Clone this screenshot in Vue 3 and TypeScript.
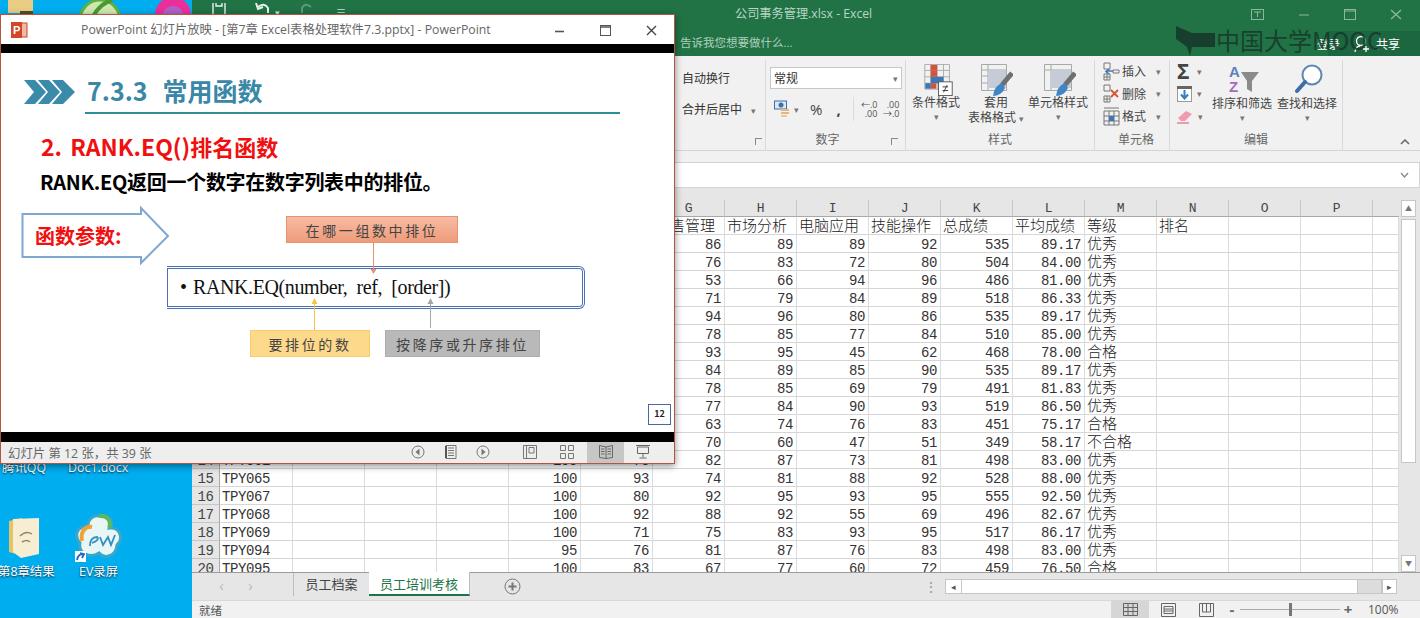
<script setup lang="ts">
const columns = "ABCDEFGHIJKLMNOP".split("");

function scoreRow(id: string, e: string, f: string, marks: string): string[] {
  return [id, "", "", "", e, f, ...marks.split(" "), "", "", ""];
}

// rows 1-13 sit behind the slide show window, only the right side shows
const rows: string[][] = [
  ["", "", "", "", "", "", "销售管理", "市场分析", "电脑应用", "技能操作", "总成绩", "平均成绩", "等级", "排名", "", ""],
  scoreRow("", "", "", "86 89 89 92 535 89.17 优秀"),
  scoreRow("", "", "", "76 83 72 80 504 84.00 优秀"),
  scoreRow("", "", "", "53 66 94 96 486 81.00 优秀"),
  scoreRow("", "", "", "71 79 84 89 518 86.33 优秀"),
  scoreRow("", "", "", "94 96 80 86 535 89.17 优秀"),
  scoreRow("", "", "", "78 85 77 84 510 85.00 优秀"),
  scoreRow("", "", "", "93 95 45 62 468 78.00 合格"),
  scoreRow("", "", "", "84 89 85 90 535 89.17 优秀"),
  scoreRow("", "", "", "78 85 69 79 491 81.83 优秀"),
  scoreRow("", "", "", "77 84 90 93 519 86.50 优秀"),
  scoreRow("", "", "", "63 74 76 83 451 75.17 合格"),
  scoreRow("", "", "", "70 60 47 51 349 58.17 不合格"),
  scoreRow("TPY061", "100", "73", "82 87 73 81 498 83.00 优秀"),
  scoreRow("TPY065", "100", "93", "74 81 88 92 528 88.00 优秀"),
  scoreRow("TPY067", "100", "80", "92 95 93 95 555 92.50 优秀"),
  scoreRow("TPY068", "100", "92", "88 92 55 69 496 82.67 优秀"),
  scoreRow("TPY069", "100", "71", "75 83 93 95 517 86.17 优秀"),
  scoreRow("TPY094", "95", "76", "81 87 76 83 498 83.00 优秀"),
  scoreRow("TPY095", "100", "83", "67 77 60 72 459 76.50 合格"),
];

function cellClass(value: string) {
  return {
    num: /^[\d.]+$/.test(value),
    cjk: /[\u4e00-\u9fff]/.test(value),
  };
}
</script>

<template>
  <div class="desktop">
    <!-- desktop icons, mostly covered by the windows -->
    <svg class="d-icon" style="left: 8px; top: 0" width="26" height="15" viewBox="0 0 26 15">
      <rect width="25" height="13" fill="#e9cd85" />
      <rect x="12" y="11" width="13" height="4" fill="#5a4a30" />
    </svg>
    <svg class="d-icon" style="left: 78px; top: 0" width="44" height="15" viewBox="0 0 44 15">
      <circle cx="22" cy="20" r="20" fill="#cfe8b0" stroke="#5fb040" stroke-width="3" />
      <path d="M16 15 Q22 4 34 0" fill="none" stroke="#4a9a30" stroke-width="4" />
    </svg>
    <svg class="d-icon" style="left: 154px; top: 0" width="40" height="15" viewBox="0 0 40 15">
      <circle cx="19" cy="15" r="18" fill="#ea2f9b" />
      <circle cx="19" cy="17" r="11" fill="#b060c8" />
    </svg>

    <span class="d-label" style="left: 2px; top: 460px">腾讯QQ</span>
    <span class="d-label" style="left: 68px; top: 460px">Doc1.docx</span>

    <svg class="d-icon" style="left: 8px; top: 516px" width="32" height="44" viewBox="0 0 32 44">
      <path d="M1 5 L14 2 L14 40 L1 36 Z" fill="#e8c266" />
      <path d="M5 3 L31 2 L31 38 L13 42 L5 36 Z" fill="#f6edd2" />
      <path d="M12 20 q6 -6 12 -2 M14 26 q5 -3 8 0" fill="none" stroke="#8a8a70" stroke-width="1.5" />
    </svg>
    <span class="d-label" style="left: -2px; top: 564px">第8章结果</span>

    <svg class="d-icon" style="left: 74px; top: 513px" width="50" height="50" viewBox="0 0 50 50">
      <path d="M25 3 C36 0 40 10 36 15 C46 14 50 26 43 32 C42 44 30 46 25 40 C16 46 4 40 6 30 C-1 22 4 12 14 14 C13 7 19 2 25 3 Z" fill="#e9f6f6" stroke="#3aa7c9" stroke-width="3" />
      <path d="M8 28 C6 18 12 13 18 14" fill="none" stroke="#f0a13a" stroke-width="4" />
      <path d="M25 3 C33 2 38 8 35 15" fill="none" stroke="#5cb85c" stroke-width="4" />
      <path d="M16 33 Q16 24 23 24 Q26 27 18 30 M26 24 L29 32 L34 24 L37 32 L41 22" fill="none" stroke="#2f8fc0" stroke-width="1.8" />
      <rect x="1" y="38" width="11" height="11" fill="#fff" />
      <path d="M3 47 Q4 41 9 41 M6 40 L10 41 L8 45" fill="none" stroke="#2266cc" stroke-width="1.8" />
    </svg>
    <span class="d-label" style="left: 79px; top: 564px">EV录屏</span>

    <!-- excel behind -->
    <div class="excel">
      <div class="xl-top">
        <div class="xl-title">
          <svg class="qat-save" width="16" height="14" viewBox="0 0 16 14"><path d="M2 0 V12 H14 V0 M5 0 V3 H11 V0" fill="none" stroke="#e9f1ec" stroke-width="1.4" /></svg>
          <svg class="qat-undo" width="18" height="14" viewBox="0 0 18 14"><path d="M3 4 Q9 -1 13 5 L13 10" fill="none" stroke="#e9f1ec" stroke-width="2" /><path d="M1 0 L3 6 L8 4" fill="none" stroke="#e9f1ec" stroke-width="2" /></svg>
          <span class="qat-caret">▾</span>
          <svg class="qat-redo" width="18" height="14" viewBox="0 0 18 14"><path d="M14 4 Q8 -1 5 5 L5 10" fill="none" stroke="#5c9a78" stroke-width="2" /></svg>
          <span class="qat-more">≡</span>
          <span class="xl-name">公司事务管理.xlsx - Excel</span>
          <div class="xl-ctrls">
            <svg width="13" height="11" viewBox="0 0 13 11"><rect x="0.5" y="0.5" width="12" height="10" fill="none" stroke="#8db69e" /><path d="M3 3 H10 M6.5 3 V8" stroke="#8db69e" /></svg>
            <svg width="12" height="11" viewBox="0 0 12 11"><path d="M1 6 H11" stroke="#8db69e" /></svg>
            <svg width="12" height="11" viewBox="0 0 12 11"><rect x="0.5" y="0.5" width="11" height="10" fill="none" stroke="#8db69e" /><path d="M1 2 H11" stroke="#8db69e" /></svg>
            <svg width="12" height="11" viewBox="0 0 12 11"><path d="M1 1 L11 10 M11 1 L1 10" stroke="#8db69e" stroke-width="1.4" /></svg>
          </div>
        </div>
        <div class="xl-tell">
          <span class="tell-text">告诉我您想要做什么...</span>
          <div class="xl-account">
            <span class="login">登录</span>
            <svg width="18" height="18" viewBox="0 0 18 18"><circle cx="9" cy="6" r="4.5" fill="none" stroke="#fff" stroke-width="1.3" /><path d="M3 17 Q4 11 8 11 M11 14 H17 M14 11 V17" fill="none" stroke="#fff" stroke-width="1.3" /></svg>
            <span>共享</span>
          </div>
        </div>
        <div class="mooc">
          <svg width="40" height="34" viewBox="0 0 40 34"><path d="M0 3 L16 10 L39 10 L39 24 L16 24 L14 33 L11 24 L0 16 Z" fill="#17362a" /></svg>
          <span>中国大学MOOC</span>
        </div>
      </div>

      <div class="ribbon">
        <div class="group g-align">
          <div class="g-body">
            <div class="wrap-line">自动换行</div>
            <div class="wrap-line">合并后居中 <i class="caret caret-merge">▾</i></div>
          </div>
          <div class="g-label"><i class="launch"></i></div>
        </div>

        <div class="group g-number">
          <div class="g-body">
            <div class="combo"><span>常规</span><i class="caret">▾</i></div>
            <div class="num-tools">
              <svg width="16" height="18" viewBox="0 0 16 18"><rect x="0.5" y="1" width="12" height="8" fill="#dbe9f6" stroke="#3d6fa8" /><circle cx="7" cy="5" r="2.5" fill="#3d6fa8" /><rect x="7" y="9" width="8" height="2" fill="#eab676" /><rect x="7" y="12" width="8" height="2" fill="#eab676" /><rect x="7" y="15" width="6" height="2" fill="#e8c9a0" /></svg>
              <i class="caret">▾</i>
              <span class="pct">%</span>
              <span class="comma">,</span>
              <span class="tool-sep"></span>
              <span class="dec">←.0<br />.00</span>
              <span class="dec">.00<br />→.0</span>
            </div>
          </div>
          <div class="g-label label-number">数字<i class="launch"></i></div>
        </div>

        <div class="group g-styles">
          <div class="g-body big-row">
            <div class="big b-cond">
              <svg width="29" height="32" viewBox="0 0 31 35">
                <path d="M0.5 0.5 H27.5 V27.5 H0.5 Z M0.5 7 H27.5 M0.5 14 H27.5 M0.5 21 H27.5 M7 0.5 V27.5 M14 0.5 V27.5 M21 0.5 V27.5" fill="none" stroke="#a8a8a8" />
                <rect x="7" y="1" width="7" height="6" fill="#d2553a" /><rect x="7" y="7" width="7" height="7" fill="#d2553a" /><rect x="7" y="14" width="14" height="7" fill="#3b78b8" /><rect x="7" y="21" width="6" height="6" fill="#d2553a" /><rect x="1" y="21" width="6" height="6" fill="#3b78b8" />
                <rect x="15.5" y="19.5" width="15" height="15" fill="#fff" stroke="#555" /><path d="M20 25 H26 M20 29 H26 M25 23 L21 31" stroke="#333" />
              </svg>
              <div class="big-text">条件格式</div>
              <i class="caret">▾</i>
            </div>
            <div class="big b-table">
              <svg width="32" height="35" viewBox="0 0 32 35">
                <path d="M0.5 0.5 H25.5 V26.5 H0.5 Z M0.5 6 H25.5 M0.5 12 H25.5 M0.5 19 H25.5 M7 0.5 V26.5" fill="none" stroke="#a8a8a8" />
                <rect x="7" y="6" width="18" height="18" fill="#c6ccd6" />
                <path d="M31 9 L21 21" stroke="#6f6f6f" stroke-width="5" /><path d="M21 19 Q13 22 12 32 Q20 32 24 24 Z" fill="#3f86c6" />
              </svg>
              <div class="big-text">套用<br />表格格式 <i class="caret">▾</i></div>
            </div>
            <div class="big b-cell">
              <svg width="32" height="35" viewBox="0 0 32 35">
                <path d="M0.5 0.5 H27.5 V26.5 H0.5 Z M0.5 6 H27.5" fill="none" stroke="#a8a8a8" /><path d="M7 0.5 V26.5" stroke="#a8a8a8" />
                <rect x="7" y="6" width="20" height="18" fill="#c6ccd6" />
                <path d="M31 9 L21 21" stroke="#6f6f6f" stroke-width="5" /><path d="M21 19 Q13 22 12 32 Q20 32 24 24 Z" fill="#3f86c6" />
              </svg>
              <div class="big-text">单元格样式</div>
              <i class="caret">▾</i>
            </div>
          </div>
          <div class="g-label">样式</div>
        </div>

        <div class="group g-cells">
          <div class="g-body">
            <div class="cell-line">
              <svg width="17" height="19" viewBox="0 0 17 19"><path d="M1 1 H7 V7 H1 Z M1 12 H7 V18 H1 Z M1 15 H7 M4 12 V18 M10 8 H16 V11 H10 Z" fill="none" stroke="#777" /><path d="M10 9 H3 M6 7 L3 9.5 L6 12" fill="none" stroke="#3b78b8" stroke-width="1.6" /></svg>
              <span>插入</span><i class="caret">▾</i>
            </div>
            <div class="cell-line">
              <svg width="17" height="19" viewBox="0 0 17 19"><path d="M1 1 H7 V7 H1 Z M1 12 H7 V18 H1 Z M4 12 V18 M1 15 H7" fill="none" stroke="#777" /><path d="M8 6 L15 13 M15 6 L8 13" stroke="#d2553a" stroke-width="1.8" /></svg>
              <span>删除</span><i class="caret">▾</i>
            </div>
            <div class="cell-line">
              <svg width="17" height="19" viewBox="0 0 17 19"><path d="M1 4 H16 V18 H1 Z M1 9 H16 M1 14 H16 M6 4 V18 M11 4 V18 M1 1 H16" fill="none" stroke="#777" /><rect x="6" y="9" width="5" height="5" fill="#3b78b8" /></svg>
              <span>格式</span><i class="caret">▾</i>
            </div>
          </div>
          <div class="g-label">单元格</div>
        </div>

        <div class="group g-edit">
          <div class="g-body big-row">
            <div class="edit-col">
              <div class="edit-line"><span class="sigma">Σ</span><i class="caret">▾</i></div>
              <div class="edit-line">
                <svg width="15" height="16" viewBox="0 0 15 16"><rect x="0.5" y="0.5" width="14" height="15" fill="#fff" stroke="#999" /><rect x="0" y="0" width="15" height="3" fill="#666" /><path d="M7.5 4 V12 M4 8.5 L7.5 12.5 L11 8.5" fill="none" stroke="#2f7fc1" stroke-width="2" /></svg>
                <i class="caret">▾</i>
              </div>
              <div class="edit-line">
                <svg width="16" height="15" viewBox="0 0 16 15"><path d="M1 9 L9 2 L15 5 L8 12 L4 12 Z" fill="#f29ab0" /><path d="M0 14 H12" stroke="#d05070" /></svg>
                <i class="caret">▾</i>
              </div>
            </div>
            <div class="big b-sort">
              <svg width="32" height="30" viewBox="0 0 32 30">
                <text x="1" y="13" class="az az-a">A</text>
                <text x="1" y="28" class="az az-z">Z</text>
                <path d="M13 8 H31 L24 17 V28 L19 25 V17 Z" fill="#8a8a8a" />
              </svg>
              <div class="big-text">排序和筛选</div>
              <i class="caret">▾</i>
            </div>
            <div class="big b-find">
              <svg width="28" height="30" viewBox="0 0 28 30">
                <circle cx="17" cy="11" r="9.5" fill="#fff" stroke="#5d86b8" stroke-width="2" />
                <path d="M10 18 L2 27" stroke="#3f6fa8" stroke-width="4" stroke-linecap="round" />
              </svg>
              <div class="big-text">查找和选择</div>
              <i class="caret">▾</i>
            </div>
          </div>
          <div class="g-label">编辑</div>
        </div>
        <svg class="collapse" width="10" height="6" viewBox="0 0 10 6"><path d="M1 5 L5 1 L9 5" fill="none" stroke="#666" stroke-width="1.5" /></svg>
      </div>

      <div class="formula-wrap">
        <div class="formula">
          <svg width="9" height="6" viewBox="0 0 9 6"><path d="M1 1 L4.5 5 L8 1" fill="none" stroke="#888" stroke-width="1.3" /></svg>
        </div>
      </div>

      <div class="sheet-wrap">
        <div class="sheet">
          <div class="grid">
            <div class="corner"></div>
            <div v-for="c in columns" :key="c" class="col-h">{{ c }}</div>
            <div class="col-h col-q"></div>
            <template v-for="(row, r) in rows" :key="r">
              <div class="row-h">{{ r + 1 }}</div>
              <div v-for="(value, i) in row" :key="i" class="cell" :class="cellClass(value)">{{ value }}</div>
              <div class="cell"></div>
            </template>
          </div>
        </div>
        <div class="v-scroll">
          <span class="arrow">▲</span>
          <span class="v-thumb"></span>
          <span class="arrow arrow-down">▼</span>
        </div>
      </div>

      <div class="tabs">
        <span class="tab-nav">‹</span>
        <span class="tab-nav">›</span>
        <span class="tab">员工档案</span>
        <span class="tab active">员工培训考核</span>
        <svg class="tab-add" width="17" height="17" viewBox="0 0 17 17"><circle cx="8.5" cy="8.5" r="7.5" fill="none" stroke="#777" /><path d="M8.5 4.5 V12.5 M4.5 8.5 H12.5" stroke="#777" stroke-width="2" /></svg>
        <span class="dots">⋮</span>
        <div class="h-scroll">
          <span class="h-arrow">◂</span>
          <span class="h-thumb"></span>
          <span class="h-track"></span>
        </div>
        <span class="h-arrow h-right">▸</span>
      </div>

      <div class="statusbar">
        <span class="ready">就绪</span>
        <div class="view on">
          <svg width="15" height="13" viewBox="0 0 15 13"><path d="M0.5 0.5 H14.5 V12.5 H0.5 Z M5 0.5 V12.5 M10 0.5 V12.5 M0.5 4.5 H14.5 M0.5 8.5 H14.5" fill="none" stroke="#666" /></svg>
        </div>
        <div class="view">
          <svg width="15" height="14" viewBox="0 0 15 14"><path d="M0.5 0.5 H14.5 V13.5 H0.5 Z M3 3.5 H12 V10.5 H3 Z M3 6 H12 M3 8 H12" fill="none" stroke="#666" /></svg>
        </div>
        <div class="view">
          <svg width="15" height="14" viewBox="0 0 15 14"><path d="M0.5 0.5 H14.5 V13.5 H0.5 Z M3.5 0.5 V9 H11.5 V0.5 M7.5 0.5 V9" fill="none" stroke="#666" /></svg>
        </div>
        <div class="zoom">
          <span class="z-btn">-</span>
          <span class="z-track"><i></i></span>
          <span class="z-btn">+</span>
          <span class="z-val">100%</span>
        </div>
      </div>
    </div>

    <!-- slide show window on top -->
    <div class="ppt">
      <div class="ppt-title">
        <svg width="18" height="18" viewBox="0 0 18 18">
          <rect x="7" y="2" width="10" height="14" fill="#f3b9a8" stroke="#c9482b" />
          <rect x="1" y="1" width="11" height="16" fill="#d24726" />
          <text x="3" y="13" class="p-mark">P</text>
        </svg>
        <span class="ppt-name">PowerPoint 幻灯片放映 - [第7章 Excel表格处理软件7.3.pptx] - PowerPoint</span>
        <div class="ppt-ctrls">
          <svg width="11" height="11" viewBox="0 0 11 11"><path d="M1 6.5 H10" stroke="#555" stroke-width="1.6" /></svg>
          <svg width="11" height="11" viewBox="0 0 11 11"><rect x="0.5" y="0.5" width="10" height="10" fill="none" stroke="#555" /><path d="M1 2 H10" stroke="#555" stroke-width="1.5" /></svg>
          <svg width="11" height="11" viewBox="0 0 11 11"><path d="M1 1 L10 10 M10 1 L1 10" stroke="#444" stroke-width="1.4" /></svg>
        </div>
      </div>
      <div class="bar-black top"></div>
      <div class="slide">
        <div class="s-head">
          <svg width="52" height="24" viewBox="0 0 52 24">
            <path d="M0 0 H11 L22 12 L11 24 H0 L10 12 Z M14 0 H25 L36 12 L25 24 H14 L24 12 Z M28 0 H39 L51 12 L39 24 H28 L38 12 Z" fill="#3a8aa9" />
          </svg>
          <span class="s-title"><span class="s-no">7.3.3</span>常用函数</span>
        </div>
        <div class="s-rule"></div>
        <div class="s-h2"><span class="h2-latin">2. RANK.EQ()</span>排名函数</div>
        <div class="s-desc">RANK.EQ返回一个数字在数字列表中的排位。</div>

        <div class="diagram">
          <div class="formula-box"><span class="bullet">•</span>RANK.EQ(number,&nbsp; ref,&nbsp; [order])</div>
          <svg class="d-lines" width="672" height="379" viewBox="0 0 672 379">
            <path d="M21.5 161 H140 V155 L167 183 L140 210 V204 H21.5 Z" fill="#fff" stroke="#7ea8d2" stroke-width="2" />
            <path d="M372.5 190 V220" stroke="#e8926c" />
            <path d="M369.5 216 L372.5 221 L375.5 216" fill="#e8926c" />
            <path d="M313.5 277 V247" stroke="#f6c444" />
            <path d="M310.5 251 L313.5 245 L316.5 251" fill="#f6c444" />
            <path d="M429.5 275 V247" stroke="#a6a6a6" />
            <path d="M426.5 251 L429.5 245 L432.5 251" fill="#a6a6a6" />
          </svg>
          <span class="fn-args">函数参数:</span>
          <div class="note n-orange">在哪一组数中排位</div>
          <div class="note n-yellow">要排位的数</div>
          <div class="note n-gray">按降序或升序排位</div>
          <div class="page-no">12</div>
        </div>
      </div>
      <div class="bar-black bottom"></div>
      <div class="ppt-status">
        <span class="ppt-count">幻灯片 第 12 张，共 39 张</span>
        <div class="ppt-tools">
          <svg class="t-prev" width="14" height="14" viewBox="0 0 14 14"><circle cx="7" cy="7" r="6" fill="none" stroke="#777" /><path d="M8.5 3.5 L4.5 7 L8.5 10.5 Z" fill="#777" /></svg>
          <svg class="t-notes" width="12" height="14" viewBox="0 0 12 14"><path d="M1 0.5 H11 V13.5 H1 Z M3 3 H9 M3 5.5 H9 M3 8 H9 M3 10.5 H9" fill="none" stroke="#777" /><path d="M1 1 V13" stroke="#555" stroke-width="2" /></svg>
          <svg class="t-next" width="14" height="14" viewBox="0 0 14 14"><circle cx="7" cy="7" r="6" fill="none" stroke="#777" /><path d="M5.5 3.5 L9.5 7 L5.5 10.5 Z" fill="#777" /></svg>
          <svg class="t-normal" width="14" height="14" viewBox="0 0 14 14"><path d="M0.5 0.5 H13.5 V13.5 H0.5 Z M3.5 0.5 V13.5 M6 2.5 H11 V8 H6 Z" fill="none" stroke="#777" /></svg>
          <svg class="t-sorter" width="14" height="14" viewBox="0 0 14 14"><path d="M0.5 0.5 H5.5 V5.5 H0.5 Z M8.5 0.5 H13.5 V5.5 H8.5 Z M0.5 8.5 H5.5 V13.5 H0.5 Z M8.5 8.5 H13.5 V13.5 H8.5 Z" fill="none" stroke="#777" /></svg>
          <span class="t-read">
            <svg width="14" height="14" viewBox="0 0 14 14"><path d="M0.5 0.5 L7 2 L13.5 0.5 V12.5 L7 13.5 L0.5 12.5 Z M7 2 V13.5 M2 4 H5.5 M2 6.5 H5.5 M2 9 H5.5 M8.5 4 H12 M8.5 6.5 H12 M8.5 9 H12" fill="none" stroke="#666" /></svg>
          </span>
          <svg class="t-show" width="14" height="14" viewBox="0 0 14 14"><path d="M0 0.5 H14 M1.5 2 H12.5 V8.5 H1.5 Z M7 8.5 V12 M3.5 13 H10.5" fill="none" stroke="#666" /></svg>
        </div>
      </div>
    </div>
  </div>
</template>

<style scoped>
.desktop {
  position: relative;
  width: 1420px;
  height: 618px;
  overflow: hidden;
  background: #00adef;
  font-family: "Open Sans", "Noto Sans CJK SC", sans-serif;
  font-size: 12px;
  color: #444;
}
.d-icon { position: absolute; }
.d-label {
  position: absolute;
  color: #fff;
  font-size: 12.4px;
  line-height: 16px;
  white-space: nowrap;
  text-shadow: 0 1px 2px #123;
}
i { font-style: normal; }

/* excel */
.excel {
  position: absolute;
  left: 192px;
  top: 0;
  width: 1228px;
  height: 618px;
  display: flex;
  flex-direction: column;
  background: #f1f1f1;
}
.xl-top {
  position: relative;
  height: 56px;
  flex: none;
  background: #217346;
}
.xl-title {
  position: relative;
  height: 28px;
  display: flex;
  align-items: flex-start;
  padding-left: 18px;
}
.qat-save { margin-top: 3px; margin-left: 1px; }
.qat-undo { margin: 3px 0 0 28px; }
.qat-caret { color: #cfe0d6; font-size: 9px; margin: 6px 0 0 2px; }
.qat-redo { margin: 3px 0 0 17px; }
.qat-more { color: #cfe0d6; margin: 4px 0 0 21px; font-size: 10px; }
.xl-name {
  position: absolute;
  left: 543px;
  top: 5px;
  color: #b9d6c5;
  font-size: 12.2px;
  line-height: 18px;
}
.xl-ctrls {
  position: absolute;
  right: 18px;
  top: 9px;
  display: flex;
  gap: 34px;
}
.xl-tell {
  height: 28px;
  display: flex;
  align-items: center;
  justify-content: space-between;
  padding-left: 488px;
  color: #afcfbc;
}
.tell-text { font-size: 11.5px; }
.xl-account {
  height: 25px;
  margin-top: 3px;
  padding: 0 20px 0 0;
  display: flex;
  align-items: center;
  gap: 6px;
  color: #fff;
  background: #1c6640;
  width: 72px;
  justify-content: flex-end;
}
.login {
  position: absolute;
  right: 80px;
  font-size: 11.5px;
}
.mooc {
  position: absolute;
  left: 984px;
  top: 23px;
  display: flex;
  align-items: center;
  color: #17382b;
  opacity: 0.85;
  font-size: 24px;
  line-height: 34px;
  font-family: "Noto Sans CJK SC", sans-serif;
  font-weight: 400;
  white-space: nowrap;
}

.ribbon {
  position: relative;
  height: 95px;
  flex: none;
  display: flex;
  background: #f1f1f1;
  border-bottom: 1px solid #d4d4d4;
  box-sizing: border-box;
}
.group {
  position: relative;
  display: flex;
  flex-direction: column;
  box-sizing: border-box;
  border-right: 1px solid #dadada;
  margin-top: 4px;
}
.g-body { flex: 1 1 0; min-height: 0; position: relative; }
.g-label {
  position: relative;
  flex: none;
  height: 20px;
  line-height: 20px;
  text-align: center;
  color: #666;
  font-size: 12px;
}
.label-number { padding-right: 16px; }
.launch {
  position: absolute;
  right: 3px;
  top: 8px;
  width: 6px;
  height: 6px;
  border-left: 1px solid #888;
  border-top: 1px solid #888;
}
.caret { font-size: 9px; color: #777; line-height: 1; }
.g-align { width: 574px; padding-left: 490px; }
.wrap-line {
  height: 31px;
  line-height: 31px;
  font-size: 12px;
  color: #333;
  white-space: nowrap;
  position: relative;
  top: 3px;
}
.caret-merge { margin-left: 6px; }
.g-number { width: 140px; padding: 7px 4px 0 4px; }
.combo {
  height: 22px;
  box-sizing: border-box;
  border: 1px solid #c8c8c8;
  background: #fff;
  display: flex;
  align-items: center;
  justify-content: space-between;
  padding: 0 3px;
  color: #333;
  width: 132px;
}
.num-tools {
  display: flex;
  align-items: center;
  margin-top: 9px;
  padding-left: 4px;
  height: 22px;
}
.num-tools .caret { margin-left: 4px; }
.pct { font-size: 15px; margin-left: 11px; color: #444; }
.comma { font-size: 15px; font-weight: 700; margin-left: 14px; width: 10px; color: #444; }
.tool-sep { width: 1px; height: 24px; background: #dcdcdc; margin: 0 1px 0 7px; }
.dec { font-size: 9px; line-height: 9px; width: 22px; text-align: right; color: #555; white-space: nowrap; }

.g-styles { width: 189px; }
.big-row { display: flex; }
.big {
  display: flex;
  flex-direction: column;
  align-items: center;
  text-align: center;
  color: #444;
}
.big-text { font-size: 12px; line-height: 15px; white-space: nowrap; margin-top: -3px; }
.big .caret { margin-top: 2px; }
.b-cond { width: 60px; }
.b-table { width: 56px; margin-left: 2px; }
.b-cell { width: 62px; margin-left: 3px; }
.b-cond svg { margin: 4px 0 2px 4px; }
.b-table svg { margin: 4px 0 -1px 2px; }
.b-cell svg { margin: 4px 0 -1px 4px; }
.g-cells { width: 75px; padding: 0 0 0 8px; }
.cell-line {
  display: flex;
  align-items: center;
  height: 22.5px;
  gap: 2px;
  color: #444;
}
.cell-line .caret { margin-left: 8px; }
.g-edit { width: 173px; border-right: 1px solid #dadada; }
.edit-col { width: 40px; padding: 0 0 0 7px; box-sizing: border-box; }
.edit-line { height: 22.5px; display: flex; align-items: center; gap: 5px; }
.sigma { font-size: 21px; line-height: 21px; color: #444; font-weight: 700; width: 15px; }
.az { font-family: "Liberation Sans", sans-serif; font-size: 15px; font-weight: 700; }
.az-a { fill: #5b7fc0; }
.az-z { fill: #a46bbd; }
.b-sort { width: 60px; margin: 3px 0 0 2px; }
.b-sort svg { margin: 1px 0 -1px 4px; }
.b-find { width: 60px; margin: 3px 0 0 5px; }
.b-find svg { margin: 1px 0 -1px 4px; }
.b-sort .big-text, .b-find .big-text { margin-top: 3px; }
.collapse { position: absolute; right: 10px; top: 83px; }

.formula-wrap {
  height: 49px;
  flex: none;
  box-sizing: border-box;
  padding-top: 11px;
  background: linear-gradient(#f1f1f1 11px, #e6e6e6 11px);
}
.formula {
  height: 26px;
  background: #fff;
  border: 1px solid #d4d4d4;
  box-sizing: border-box;
  display: flex;
  align-items: center;
  justify-content: flex-end;
  padding-right: 10px;
}

.sheet-wrap {
  flex: 1;
  min-height: 0;
  display: flex;
  background: #e6e6e6;
}
.sheet {
  width: 1207px;
  overflow: hidden;
  height: 372px;
  background: #fff;
}
.grid {
  display: grid;
  grid-template-columns: 28px 73px repeat(15, 72px) 26px;
  grid-auto-rows: 18px;
  grid-template-rows: 17px;
  line-height: 21px;
  font-family: "Liberation Mono", "Noto Sans CJK SC", monospace;
  font-size: 14px;
  letter-spacing: -0.4px;
  color: #333;
}
.corner, .col-h, .row-h {
  background: #e6e6e6;
  box-sizing: border-box;
  text-align: center;
  color: #444;
}
.col-h {
  border-right: 1px solid #c6c6c6;
  border-bottom: 1px solid #a8a8a8;
  line-height: 18px;
  font-size: 13px;
}
.col-q { border-right: none; }
.row-h { border-right: 1px solid #a8a8a8; border-bottom: 1px solid #c6c6c6; }
.cell {
  box-sizing: border-box;
  border-right: 1px solid #dcdcdc;
  border-bottom: 1px solid #d6d6d6;
  padding: 0 2px;
  white-space: nowrap;
  background: #fff;
}
.cell.num { text-align: right; padding-right: 3px; }
.cell.cjk {
  font-family: "Noto Sans CJK SC", sans-serif;
  font-size: 15px;
  letter-spacing: 0;
  line-height: 16px;
  font-weight: 300;
  color: #222;
}
.v-scroll {
  width: 21px;
  height: 372px;
  position: relative;
  background: #e6e6e6;
}
.arrow {
  position: absolute;
  left: 2px;
  top: 0;
  width: 15px;
  height: 17px;
  background: #fff;
  border: 1px solid #c6c6c6;
  box-sizing: border-box;
  font-size: 7px;
  line-height: 15px;
  text-align: center;
  color: #777;
}
.arrow-down { top: auto; bottom: 0; }
.v-thumb {
  position: absolute;
  left: 2px;
  top: 19px;
  width: 15px;
  height: 244px;
  background: #fff;
  border: 1px solid #c6c6c6;
  box-sizing: border-box;
}

.tabs {
  position: relative;
  height: 28px;
  flex: none;
  display: flex;
  align-items: flex-start;
  box-sizing: border-box;
  border-top: 1px solid #9c9c9c;
  background: #e6e6e6;
  font-size: 13px;
}
.tab-nav {
  width: 29px;
  text-align: center;
  color: #bbb;
  font-size: 15px;
  line-height: 24px;
}
.tab-nav:first-child { margin-left: 15px; }
.tab {
  margin-left: 28px;
  width: 76px;
  height: 23px;
  line-height: 23px;
  text-align: center;
  box-sizing: border-box;
  border-left: 1px solid #bdbdbd;
  color: #444;
  font-size: 13px;
}
.tab.active {
  margin-left: 0;
  width: 101px;
  height: 24px;
  background: #fff;
  color: #217346;
  border-left: none;
  border-bottom: 2px solid #217346;
  border-right: 1px solid #bdbdbd;
  margin-top: -1px;
  line-height: 25px;
}
.tab-add { margin: 5px 0 0 34px; }
.dots { position: absolute; left: 732px; top: 4px; color: #999; font-size: 14px; line-height: 20px; }
.h-scroll {
  position: absolute;
  left: 753px;
  top: 6px;
  width: 437px;
  height: 15px;
  display: flex;
  box-sizing: border-box;
  border: 1px solid #c6c6c6;
  background: #fff;
}
.h-arrow { width: 15px; text-align: center; font-size: 9px; line-height: 13px; color: #555; background: #fff; }
.h-thumb { width: 395px; background: #fff; border-left: 1px solid #c6c6c6; border-right: 1px solid #c6c6c6; }
.h-track { flex: 1; background: #dcdcdc; }
.h-right {
  position: absolute;
  left: 1190px;
  top: 6px;
  height: 15px;
  box-sizing: border-box;
  border: 1px solid #c6c6c6;
}

.statusbar {
  height: 18px;
  flex: none;
  display: flex;
  align-items: center;
  box-sizing: border-box;
  background: #f1f1f1;
  border-top: 1px solid #d8d8d8;
  color: #555;
}
.ready { padding-left: 7px; width: 919px; box-sizing: border-box; font-size: 11.5px; }
.view {
  width: 38px;
  height: 17px;
  display: flex;
  align-items: center;
  justify-content: center;
}
.view.on { background: #d6d6d6; }
.zoom {
  display: flex;
  align-items: center;
  margin-left: 1px;
  flex: 1;
}
.z-btn { width: 12px; text-align: center; font-size: 15px; font-weight: 700; line-height: 15px; color: #666; }
.z-track {
  position: relative;
  width: 100px;
  height: 1px;
  background: #aaa;
  margin: 0 2px;
}
.z-track i {
  position: absolute;
  left: 49px;
  top: -6px;
  width: 3px;
  height: 13px;
  background: #777;
}
.z-val { margin-left: 14px; font-size: 12px; }

/* powerpoint */
.ppt {
  position: absolute;
  left: 0;
  top: 14px;
  width: 675px;
  height: 450px;
  box-sizing: border-box;
  border: 1px solid #b2573f;
  box-shadow: 0 2px 7px rgba(0, 0, 0, 0.45);
  display: flex;
  flex-direction: column;
  background: #fff;
}
.ppt-title {
  position: relative;
  height: 29px;
  flex: none;
  display: flex;
  align-items: center;
  padding-left: 9px;
  background: #fff;
}
.p-mark { font-family: "Liberation Sans", sans-serif; font-size: 11px; font-weight: 700; fill: #fff; }
.ppt-name {
  position: absolute;
  left: 80px;
  top: 6px;
  font-size: 12.3px;
  line-height: 18px;
  color: #666;
  white-space: nowrap;
}
.ppt-ctrls {
  position: absolute;
  right: 17px;
  top: 10px;
  display: flex;
  gap: 35px;
}
.bar-black { background: #000; flex: none; }
.bar-black.top { height: 9px; }
.bar-black.bottom { height: 10px; }
.slide {
  position: relative;
  flex: 1;
  background: #fff;
  font-family: "Noto Sans CJK SC", sans-serif;
}
.s-head {
  display: flex;
  align-items: center;
  gap: 11px;
  margin: 24px 0 0 23px;
  height: 26px;
}
.s-head svg { margin-top: 3px; }
.s-title {
  color: #3a87a6;
  font-size: 25px;
  font-weight: 700;
  line-height: 26px;
  white-space: nowrap;
}
.s-no { margin-right: 15px; }
.s-rule {
  margin: 9px 0 0 84px;
  width: 535px;
  height: 2px;
  background: #2f8d98;
}
.s-h2 {
  margin: 17px 0 0 40px;
  color: #f01010;
  font-size: 22px;
  font-weight: 700;
  line-height: 30px;
}
.h2-latin { font-size: 23px; word-spacing: 3px; }
.s-desc {
  margin: 7px 0 0 39px;
  color: #000;
  font-size: 20px;
  font-weight: 700;
  line-height: 28px;
  letter-spacing: -0.3px;
}
.diagram { position: absolute; inset: 0; }
.d-lines { position: absolute; left: 0; top: 0; }
.fn-args {
  position: absolute;
  left: 34px;
  top: 170px;
  color: #f01010;
  font-size: 20px;
  font-weight: 700;
  line-height: 26px;
}
.note {
  position: absolute;
  box-sizing: border-box;
  height: 27px;
  line-height: 26px;
  text-align: center;
  font-size: 14px;
  letter-spacing: 2.6px;
  color: #444;
}
.n-orange {
  left: 285px;
  top: 163px;
  width: 172px;
  background: linear-gradient(#f7bba3, #ee9c7a);
  border: 1px solid #e8956f;
}
.n-yellow {
  left: 249px;
  top: 277px;
  width: 120px;
  background: #fdd98c;
  border: 1px solid #f8cc66;
}
.n-gray {
  left: 384px;
  top: 277px;
  width: 155px;
  background: #b9b9b9;
  border: 1px solid #aeaeae;
}
.formula-box {
  position: absolute;
  left: 166px;
  top: 213px;
  width: 418px;
  height: 43px;
  box-sizing: border-box;
  border: 3px double #4a6fb8;
  border-left: 1px solid #4a6fb8;
  border-radius: 0 6px 6px 0;
  background: #fff;
  padding-left: 12px;
  font-family: "Liberation Serif", serif;
  font-size: 20px;
  line-height: 36px;
  letter-spacing: -0.4px;
  color: #111;
  white-space: nowrap;
}
.bullet { display: inline-block; width: 13px; }
.page-no {
  position: absolute;
  left: 647px;
  top: 351px;
  width: 23px;
  height: 21px;
  box-sizing: border-box;
  border: 1px solid #4a6a9c;
  font-size: 9px;
  font-weight: 700;
  line-height: 18px;
  text-align: center;
  color: #222;
}
.ppt-status {
  flex: none;
  height: 21px;
  position: relative;
  background: #eeeeee;
  display: flex;
  align-items: center;
}
.ppt-count { margin-left: 7px; color: #666; font-size: 12.4px; }
.ppt-tools {
  position: absolute;
  left: 0;
  top: 0;
  width: 100%;
  height: 21px;
}
.ppt-tools svg { position: absolute; top: 3px; }
.t-prev { left: 410px; }
.t-notes { left: 444px; }
.t-next { left: 475px; }
.t-normal { left: 522px; }
.t-sorter { left: 559px; }
.t-read {
  position: absolute;
  left: 586px;
  top: 0;
  width: 37px;
  height: 21px;
  background: #c6c6c6;
}
.ppt-tools .t-read svg { left: 12px; top: 3px; }
.t-show { left: 635px; }
</style>

<style>
html, body { margin: 0; padding: 0; overflow: hidden; }
</style>
